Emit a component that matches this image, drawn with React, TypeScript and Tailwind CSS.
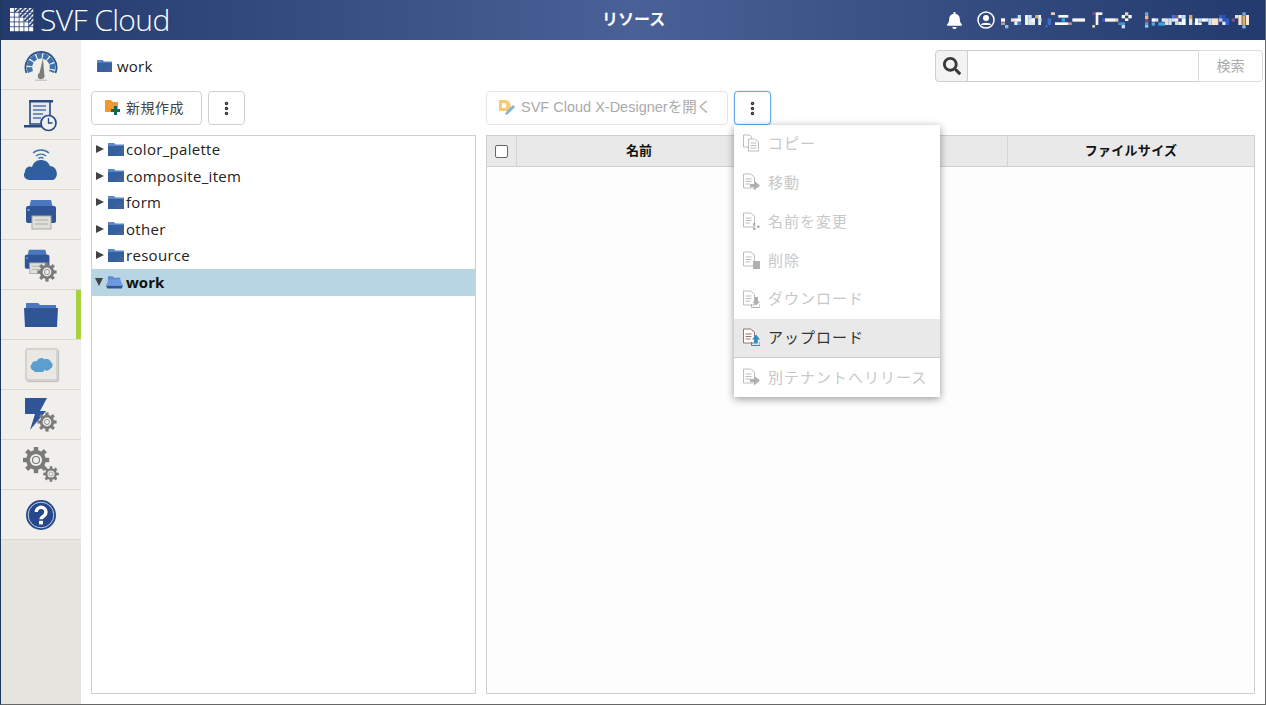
import { MoreVertical } from "lucide-react";
import { FaSearch, FaBell } from "react-icons/fa";

const FONT = "font-['Open_Sans','Noto_Sans_CJK_JP',sans-serif]";

function Folder({ className = "w-[16px] h-[13px]", open = false }: { className?: string; open?: boolean }) {
  if (open) {
    return (
      <svg viewBox="0 0 18 14" className={className}>
        <path d="M2 1h5l1.500 1.500H15V8H2z" fill="#5a8ad0" />
        <path d="M3 4h12l3 7H0z" fill="#6d9adf" />
        <path d="M0 11h18l-1.500 3h-15z" fill="#2f5597" />
      </svg>
    );
  }
  return (
    <svg viewBox="0 0 16 13" className={className}>
      <path d="M0 0h6l1.500 1.500H16V13H0z" fill="#5b86c9" />
      <path d="M0 3h16v10H0z" fill="#34609f" />
      <path d="M16 3v10H7z" fill="#42619b" />
    </svg>
  );
}

function Gear({ x, y, r, color = "#7a7a7a", hole = "#f0efeb" }: { x: number; y: number; r: number; color?: string; hole?: string }) {
  const teeth = [0, 45, 90, 135];
  return (
    <g>
      {teeth.map((a) => (
        <rect key={a} x={x - r * 0.2} y={y - r * 1.2} width={r * 0.4} height={r * 2.4} fill={color} transform={`rotate(${a} ${x} ${y})`} />
      ))}
      <circle cx={x} cy={y} r={r * 0.9} fill={color} />
      <circle cx={x} cy={y} r={r * 0.55} fill={hole} />
      <circle cx={x} cy={y} r={r * 0.32} fill="none" stroke={color} strokeWidth={r * 0.1} />
    </g>
  );
}

function Printer({ scale = 1, dx = 0, dy = 0 }: { scale?: number; dx?: number; dy?: number }) {
  return (
    <g transform={`translate(${dx} ${dy}) scale(${scale})`}>
      <path d="M6 1h20l2 8H4z" fill="#4a78bf" />
      <path d="M3 7h26a2 2 0 0 1 2 2v13a2 2 0 0 1-2 2H3a2 2 0 0 1-2-2V9a2 2 0 0 1 2-2z" fill="#2f5597" />
      <rect x="2.500" y="10" width="2" height="2" fill="#7fa6d8" />
      <rect x="7" y="17" width="19" height="13" fill="#dfe0da" stroke="#a9a9a4" />
      <path d="M10 21h13M10 25h13" stroke="#a9a9a4" />
    </g>
  );
}

const navIcons = [
  <svg key="gauge" viewBox="0 0 34 34" className="w-[34px] h-[34px]">
    <path d="M2.500 25a15.500 15.500 0 1 1 29 0" fill="none" stroke="#2c5288" strokeWidth="1.800" />
    <path d="M6.500 24a11.500 11.500 0 1 1 21 0" fill="none" stroke="#3f73ab" strokeWidth="5.500" strokeDasharray="5 1.200" />
    <path d="M19 10l1.500 19h-6z" fill="#7d7d7d" />
    <circle cx="17" cy="28" r="3.200" fill="#7d7d7d" />
    <rect x="11" y="31.500" width="12" height="1.500" fill="#c9c9c6" />
  </svg>,
  <svg key="log" viewBox="0 0 34 34" className="w-[34px] h-[34px]">
    <path d="M6 3h20v23H6z" fill="#e7e9ee" stroke="#2a4a84" strokeWidth="1.600" />
    <path d="M5 2h24v2.500H5z" fill="#2a4a84" />
    <path d="M9 8h13M9 12h13M9 16h10M9 20h8" stroke="#5573a5" strokeWidth="1.300" />
    <path d="M0 27h19v2.500H0z" fill="#2a4a84" />
    <circle cx="24.500" cy="25" r="7.500" fill="#eef0f2" stroke="#2a4a84" strokeWidth="1.700" />
    <path d="M24.500 20v5h4" fill="none" stroke="#2a4a84" strokeWidth="1.300" />
  </svg>,
  <svg key="cloud" viewBox="0 0 34 34" className="w-[34px] h-[34px]">
    <path d="M9 5a12 12 0 0 1 16 0M12 8a8 8 0 0 1 10 0M14.500 10.500a4 4 0 0 1 5 0" fill="none" stroke="#3f73ab" strokeWidth="1.400" />
    <path d="M5 32a5 5 0 0 1-4-8 5 5 0 0 1 7-5 9.500 9.500 0 0 1 18-1 7.500 7.500 0 0 1 3 14z" fill="#2f5f9f" />
  </svg>,
  <svg key="printer" viewBox="0 0 32 31" className="w-[32px] h-[31px]">
    <Printer />
  </svg>,
  <svg key="printer-gear" viewBox="0 0 34 34" className="w-[34px] h-[34px]">
    <Printer scale={0.82} dy={1} />
    <Gear x={23} y={24} r={8} />
  </svg>,
  <svg key="folder" viewBox="0 0 34 24" className="w-[34px] h-[24px]">
    <path d="M2 0h12l2 2h16v6H2z" fill="#4a78bf" />
    <path d="M0 5h34l-1 19H1z" fill="#2f5597" />
  </svg>,
  <div key="sf" className="w-[33px] h-[33px] rounded-[3px] bg-[#e9e8e3] border-2 border-[#d4d3ce] shadow-[1px_1px_1px_#bbb] flex items-center justify-center">
    <svg viewBox="0 0 24 14" className="w-[23px] h-[14px]">
      <path d="M4 13a4 4 0 0 1-2-7 4 4 0 0 1 5-3 5 5 0 0 1 8-2 5 5 0 0 1 7 3 4 4 0 0 1-1 7 4 4 0 0 1-6 1 6 6 0 0 1-11 1z" fill="#5d9ed1" />
    </svg>
  </div>,
  <svg key="bolt" viewBox="0 0 34 36" className="w-[34px] h-[36px]">
    <path d="M1 1h22l-7 13h6L6 33l5-16H1z" fill="#2f5597" />
    <Gear x={23} y={25} r={8} />
  </svg>,
  <svg key="gears" viewBox="0 0 36 36" className="w-[36px] h-[36px]">
    <Gear x={13} y={13} r={11} />
    <Gear x={28} y={27} r={6.500} />
  </svg>,
  <svg key="help" viewBox="0 0 30 30" className="w-[30px] h-[30px]">
    <circle cx="15" cy="15" r="15" fill="#26478b" />
    <circle cx="15" cy="15" r="12.800" fill="none" stroke="#e8edf6" strokeWidth="0.800" />
    <path d="M10.300 12a4.800 4.800 0 1 1 7.200 4.200c-1.500.9-2.500 1.500-2.500 3" fill="none" stroke="#fff" strokeWidth="3.400" />
    <rect x="13" y="20.800" width="4" height="3.600" fill="#fff" />
  </svg>,
];

// blurred tenant and user names, coordinates are 3x page pixels
const mosaic: [number, number, number, number, string][] = [
  [18, 28, 12, 10, "#fff"], [18, 40, 12, 8, "#c09a95"], [30, 48, 10, 10, "#7fc4ee"], [48, 28, 12, 10, "#f3d8d5"], [58, 38, 10, 10, "#e8f2fb"],
  [60, 28, 10, 10, "#fff"], [68, 18, 10, 10, "#b8dcf5"], [68, 28, 10, 10, "#fff"], [68, 38, 10, 10, "#3e76d2"],
  [90, 18, 10, 30, "#f5f0e5"], [100, 18, 10, 10, "#cde6f8"], [100, 28, 20, 20, "#d2e8fa"], [110, 28, 10, 10, "#fff"], [120, 18, 10, 10, "#d9a766"],
  [130, 18, 8, 30, "#fff"], [130, 28, 10, 10, "#bde0f8"], [158, 28, 10, 20, "#3a6fd0"], [168, 10, 12, 8, "#edcfae"], [150, 48, 8, 8, "#3a5fc0"],
  [190, 18, 30, 8, "#f5f8fc"], [180, 40, 40, 8, "#fff"], [200, 28, 10, 10, "#27a8e0"], [220, 40, 10, 8, "#c9958a"], [232, 28, 38, 10, "#f6f2f7"],
  [292, 10, 10, 8, "#7a4f86"], [302, 10, 20, 8, "#f7f7f7"], [302, 18, 8, 30, "#f5f5f0"], [292, 48, 8, 8, "#e7cfae"], [322, 28, 8, 10, "#2f5fd0"],
  [330, 28, 30, 10, "#f8f5f8"], [360, 28, 10, 10, "#e6d2c0"], [380, 18, 10, 10, "#fff"], [370, 40, 20, 8, "#4a8fd8"], [380, 48, 10, 10, "#bfe0f7"],
  [390, 10, 10, 10, "#f2d5c0"], [400, 18, 10, 10, "#fff"], [390, 28, 10, 8, "#fff"],
  [450, 10, 10, 10, "#6aa9dc"], [450, 20, 10, 10, "#e6c08a"], [450, 30, 10, 10, "#8a4a78"], [450, 40, 10, 8, "#5a9bd8"], [450, 48, 10, 8, "#8ac7ef"],
  [470, 28, 10, 10, "#fff"], [480, 28, 10, 10, "#cbe5f8"], [470, 40, 10, 10, "#5aa0e0"], [490, 40, 20, 10, "#3fa0e0"], [500, 28, 10, 10, "#e0eefa"],
  [510, 28, 10, 20, "#f4d9d0"], [520, 28, 10, 20, "#cfe2f5"], [530, 18, 10, 10, "#3f6fd0"], [530, 28, 10, 10, "#d8e8f8"], [540, 18, 10, 10, "#8a4a78"],
  [540, 28, 10, 10, "#f7f7f7"], [540, 38, 10, 10, "#e7d4c0"], [550, 18, 10, 10, "#f4f8fc"], [550, 38, 10, 10, "#f4f8fc"], [560, 18, 12, 10, "#bfe0fa"], [560, 28, 12, 20, "#fff"],
  [582, 18, 10, 10, "#d9a766"], [582, 28, 10, 20, "#f3e3c5"], [592, 40, 10, 8, "#4060c0"], [600, 28, 10, 20, "#fff"], [610, 28, 10, 10, "#bfe0f7"], [610, 40, 10, 8, "#f2f7fb"],
  [620, 28, 10, 10, "#fff"], [630, 28, 10, 10, "#d8ecf9"], [640, 28, 10, 20, "#bde0f8"], [650, 28, 10, 20, "#fbe4d0"], [660, 28, 10, 20, "#f5e0c8"],
  [672, 18, 10, 10, "#2f5fd0"], [672, 28, 12, 10, "#c5c9d0"], [682, 18, 10, 20, "#2f4fc0"], [682, 38, 10, 10, "#e7f0f8"], [692, 28, 10, 20, "#2f5fd0"],
  [710, 28, 10, 10, "#7a4f86"], [720, 18, 10, 10, "#f2dcc8"], [730, 18, 10, 30, "#f7e6d0"], [742, 10, 10, 10, "#6aa9dc"], [742, 20, 8, 30, "#d8b070"], [742, 50, 10, 8, "#7fc4ee"], [752, 18, 10, 30, "#f7ead8"],
];

function Mosaic() {
  return (
    <svg viewBox="0 0 780 66" className="w-[260px] h-[22px]">
      {mosaic.map(([x, y, w, h, c]) => (
        <rect key={`${x}-${y}`} x={x} y={y} width={w} height={h} fill={c} />
      ))}
    </svg>
  );
}

type Badge = "copy" | "arrow" | "dots" | "trash" | "down" | "up";

function DocIcon({ active = false, badge }: { active?: boolean; badge: Badge }) {
  const c = active ? "#9b6f6f" : "#bdbdbd";
  const b = active ? "#2e8fc2" : "#b0b0b0";
  return (
    <svg viewBox="0 0 17 18" className="w-[17px] h-[18px]">
      {badge === "copy" && <path d="M.5 1h6l2 2v10H.5z" fill="#fff" stroke={c} />}
      <path d={badge === "copy" ? "M5.500 5h6l4 3v9h-10z" : "M.5 1h7l4 3v11h-11z"} fill="#fff" stroke={c} />
      <path d={badge === "copy" ? "M7.500 9h6M7.500 11.500h6M7.500 14h6" : "M2.500 6h6M2.500 8.500h6M2.500 11h5"} stroke={c} />
      {badge === "arrow" && <path d="M7 14v-3h4V7.500l6 5-6 5V14z" fill={b} />}
      {badge === "dots" && <path d="M10 11h2.500v2.500H10zM14 13.500h2.500V16H14zM10 15.500h2.500V18H10z" fill={b} />}
      {badge === "trash" && <rect x="10" y="10" width="7" height="8" fill={b} />}
      {badge === "down" && (
        <>
          <path d="M11.500 7h3.500v4.500h2L13.200 15.500 9.500 11.500h2z" fill={b} />
          <path d="M8.500 14v3.500h8.500V14" fill="none" stroke={b} />
        </>
      )}
      {badge === "up" && (
        <>
          <path d="M13 6.500l4 5h-2.200v4h-3.600v-4H9z" fill={b} />
          <path d="M8.500 14v3.500h8.500V14" fill="none" stroke={b} />
        </>
      )}
    </svg>
  );
}

function MenuItem({ badge, label, active = false, last = false }: { badge: Badge; label: string; active?: boolean; last?: boolean }) {
  return (
    <div className={`${active ? "h-[38px] pb-[1px] bg-[#e9e9e9] text-[#333]" : last ? "h-[39px] pb-[1px]" : "h-[38.800px] pb-[2px]"} flex items-center pl-[9px] gap-[8px]`}>
      <DocIcon badge={badge} active={active} />
      <span>{label}</span>
    </div>
  );
}

const treeItems = ["color_palette", "composite_item", "form", "other", "resource"];

export default function App() {
  return (
    <div className={`h-[705px] w-[1266px] overflow-hidden flex flex-col bg-white border-l border-l-[#1d3a5e] border-r border-r-[#666] border-b border-b-[#666] ${FONT}`}>
      {/* Header */}
      <header className="h-[40px] shrink-0 flex items-center justify-between pl-[9px] pr-[10px] bg-gradient-to-r from-[#233a6e] via-[#4a6197] to-[#233a6e] text-white relative">
        <div className="flex items-center gap-[6px]">
          <svg viewBox="0 0 25 25" className="w-[24px] h-[24px]">
            <defs>
              <pattern id="logo-grid" width="5" height="5" patternUnits="userSpaceOnUse">
                <rect width="4.200" height="4.200" fill="#fff" />
              </pattern>
            </defs>
            <rect width="25" height="25" fill="url(#logo-grid)" />
            <path d="M9 0L5 4M14 0L9 5M19 0L10 9M24 0L14 10M25 4L15 14M25 9L19 15M25 14L20 19M25 19L24 20" stroke="#2c4478" strokeWidth="1.800" />
          </svg>
          <span className="text-[30px] leading-none font-light tracking-[-0.6px]">SVF Cloud</span>
        </div>
        <span className="absolute left-[601px] top-[9px] text-[16px] leading-[20px] font-bold">リソース</span>
        <div className="flex items-center">
          <FaBell size={17} className="mr-[14px]" />
          <svg viewBox="0 0 18 18" className="w-[18px] h-[18px]">
            <circle cx="9" cy="9" r="8" fill="none" stroke="#fff" strokeWidth="1.500" />
            <circle cx="9" cy="7" r="3" fill="#fff" />
            <path d="M4 14c0-3 10-3 10 0z" fill="#fff" />
          </svg>
          <Mosaic />
        </div>
      </header>

      <div className="flex-1 flex min-h-0">
        {/* Sidebar */}
        <nav className="w-[80px] shrink-0 bg-[#e6e5df]">
          {navIcons.map((icon, i) => (
            <div key={i} className="h-[50px] flex items-center justify-center bg-[#f0efeb] border-b border-[#d9d8d1] relative">
              {icon}
              {i === 5 && <div className="absolute right-0 top-0 bottom-0 w-[5px] bg-[#a6d23c]" />}
            </div>
          ))}
        </nav>

        {/* Main */}
        <main className="flex-1 min-w-0 pl-[10px] pr-[2px] pt-[10px] pb-[10px] flex flex-col">
          <div className="h-[32px] shrink-0 flex items-center justify-between">
            <div className="flex items-center gap-[5px] pl-[6px]">
              <Folder className="w-[15px] h-[12px]" />
              <span className="text-[15px] tracking-[0.2px] text-[#222]">work</span>
            </div>
            <div className="flex h-[32px] w-[328px]">
              <div className="w-[33px] flex items-center justify-center bg-[#f3f3f3] border border-[#cfcfcf] rounded-l-[4px]">
                <FaSearch size={18} className="text-[#3a3a3a]" />
              </div>
              <div className="flex-1 border-y border-[#cfcfcf] bg-white" />
              <div className="w-[65px] pb-[2px] flex items-center justify-center border border-[#dcdcdc] rounded-r-[4px] text-[14px] text-[#aaa]">検索</div>
            </div>
          </div>

          <div className="h-[34px] mt-[9px] shrink-0 flex relative">
            <div className="w-[395px] flex gap-[6px]">
              <button className="w-[111px] pl-[12px] pb-[2px] flex items-center gap-[5px] border border-[#cfcfcf] rounded-[4px] text-[14px] tracking-[0.5px] text-[#444] bg-white">
                <svg viewBox="0 0 17 16" className="w-[17px] h-[16px]">
                  <path d="M1 1h6l1.500 2H14v10H1z" fill="#f0982e" />
                  <path d="M10 7h3v3h3v3h-3v3h-3v-3H7v-3h3z" fill="#12675a" />
                </svg>
                新規作成
              </button>
              <button className="w-[37px] flex items-center justify-center border border-[#cfcfcf] rounded-[4px] bg-white">
                <MoreVertical size={17} strokeWidth={3} className="text-[#333]" />
              </button>
            </div>
            <div className="flex gap-[6px]">
              <button className="w-[242px] pl-[11px] pb-[1px] flex items-center gap-[6px] border border-[#e5e5e5] rounded-[4px] text-[14.500px] font-['Liberation_Sans','Noto_Sans_CJK_JP',sans-serif] text-[#aaa] bg-white">
                <svg viewBox="0 0 17 17" className="w-[17px] h-[17px]">
                  <path d="M1 1h6a6 6 0 0 1 3 11H1zM4 4v5h3a3 3 0 0 0 0-5z" fill="#f8c977" />
                  <path d="M15 6l2 2-7 7-3 1 1-3z" fill="#7eb4dc" />
                </svg>
                SVF Cloud X-Designerを開く
              </button>
              <button className="w-[37px] flex items-center justify-center border border-[#66a9ea] rounded-[4px] bg-white shadow-[0_0_2px_#a8cff2]">
                <MoreVertical size={17} strokeWidth={3} className="text-[#333]" />
              </button>
            </div>

            {/* Dropdown */}
            <div className="absolute left-[643px] top-[34px] w-[206px] z-10 bg-white shadow-[0_2px_8px_rgba(0,0,0,0.4)] text-[15px] text-[#c8c8c8] tracking-[1px]">
              <MenuItem badge="copy" label="コピー" />
              <MenuItem badge="arrow" label="移動" />
              <MenuItem badge="dots" label="名前を変更" />
              <MenuItem badge="trash" label="削除" />
              <MenuItem badge="down" label="ダウンロード" />
              <MenuItem badge="up" label="アップロード" active />
              <div className="border-t border-[#cccccc]" />
              <MenuItem badge="arrow" label="別テナントへリリース" last />
            </div>
          </div>

          <div className="flex-1 mt-[10px] min-h-0 flex">
            {/* Tree */}
            <div className="w-[385px] border border-[#cfcfcf] bg-white text-[15px] tracking-[0.3px] text-[#222]">
              {treeItems.map((name) => (
                <div key={name} className="h-[26.500px] flex items-center pl-[4px]">
                  <span className="w-0 h-0 border-y-[4.500px] border-y-transparent border-l-[8px] border-l-[#444] mr-[4px]" />
                  <Folder />
                  <span className="ml-[2px]">{name}</span>
                </div>
              ))}
              <div className="h-[27px] flex items-center pl-[3px] bg-[#b8d5e3]">
                <span className="w-0 h-0 border-x-[4.500px] border-x-transparent border-t-[8px] border-t-[#444] mr-[3px]" />
                <Folder className="w-[17px] h-[14px]" open />
                <span className="ml-[3px] font-bold text-[#111] tracking-normal">work</span>
              </div>
            </div>

            {/* File table */}
            <div className="ml-[10px] w-[769px] border border-[#cfcfcf] bg-[#fdfdfd]">
              <div className="h-[31px] flex bg-[#e9e9e9] border-b border-[#cfcfcf] text-[13px] font-bold text-[#111]">
                <div className="w-[30px] flex items-center justify-center border-r border-[#d5d5d5]">
                  <span className="w-[13px] h-[13px] rounded-[2px] border border-[#666] bg-white" />
                </div>
                <div className="w-[491px] border-r border-[#d5d5d5] flex items-center justify-center pr-[246px]">
                  <span>名前</span>
                </div>
                <div className="flex-1 flex items-center justify-center tracking-[0.3px]">ファイルサイズ</div>
              </div>
            </div>
          </div>
        </main>
      </div>
    </div>
  );
}
